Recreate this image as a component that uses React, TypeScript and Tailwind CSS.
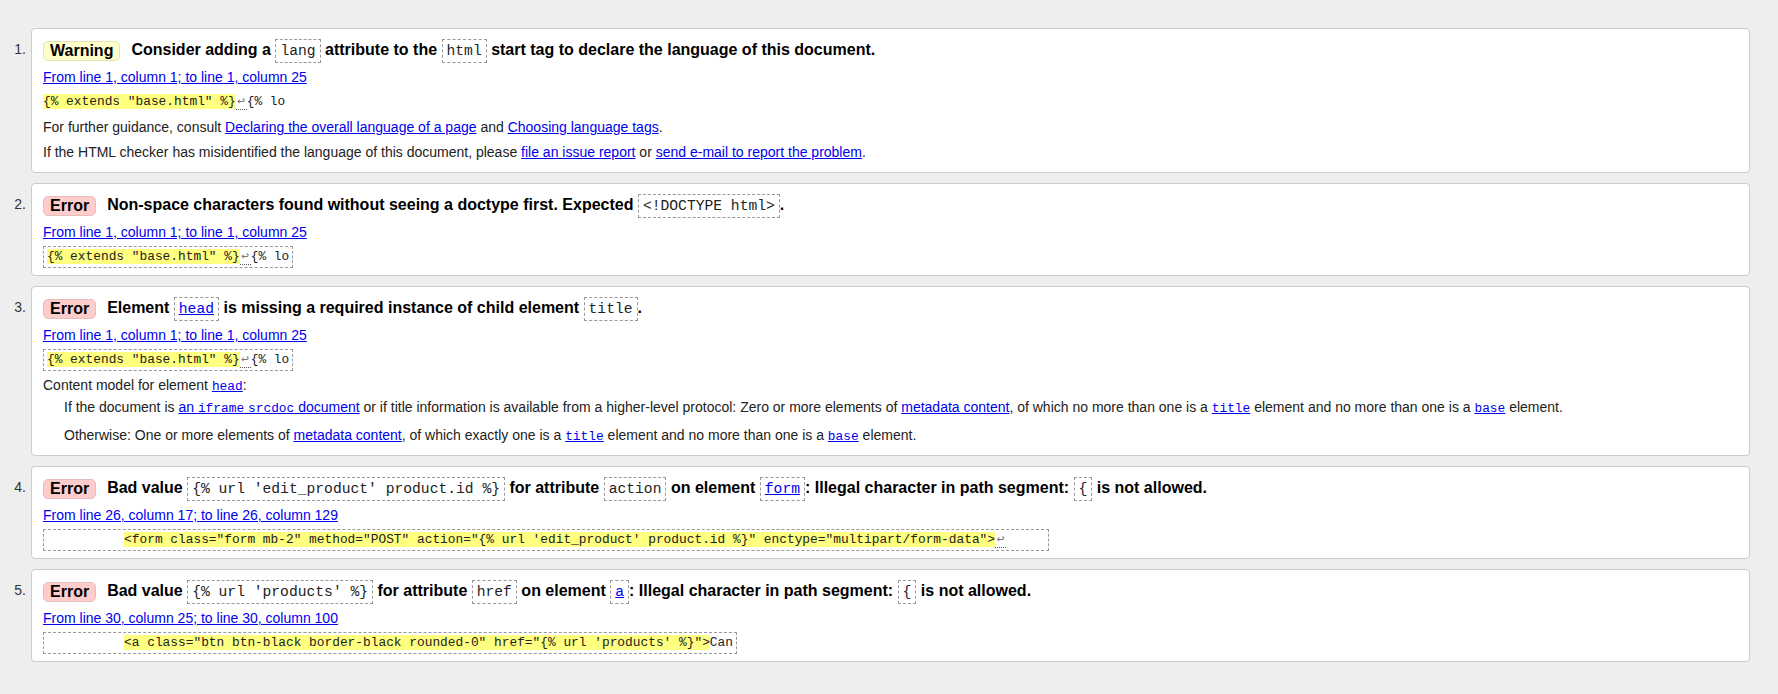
import type { ReactNode } from 'react';

// Nu HTML checker style result list: numbered cards with a badge, a location link and a source extract.

const mono = "font-['Liberation_Mono','DejaVu_Sans_Mono',monospace]";

function HCode({ children, link }: { children: ReactNode; link?: boolean }) {
  return (
    <code
      className={`${mono} inline-block align-middle border border-dashed border-[#999] px-[4px] py-[2px] leading-[18px] text-[14.67px] font-normal ${
        link ? 'text-[#00e] underline' : 'text-[#222]'
      }`}
    >
      {children}
    </code>
  );
}

function C({ children }: { children: ReactNode }) {
  return <code className={`${mono} text-[12.85px] leading-none`}>{children}</code>;
}

function A({ children }: { children: ReactNode }) {
  return <a className="text-[#00e] underline cursor-pointer">{children}</a>;
}

function Mark({ children }: { children: ReactNode }) {
  return <span className="bg-[#ffff80]">{children}</span>;
}

function Lf() {
  return (
    <span className="inline-block w-[11px] text-center leading-none text-[#777] border-b border-dotted border-[#555]">↩</span>
  );
}

function Heading({ kind, children }: { kind: 'warning' | 'error'; children: ReactNode }) {
  return (
    <div className="h-[25px] leading-[25px] text-[16px] font-bold text-black whitespace-nowrap">
      <strong
        className={`inline-block align-middle mr-[11px] px-[6px] leading-[18px] rounded-[5px] border ${
          kind === 'warning' ? 'bg-[#ffffcc] border-[#e4e4b0]' : 'bg-[#ffcccc] border-[#e8bcbc]'
        }`}
      >
        {kind === 'warning' ? 'Warning' : 'Error'}
      </strong>
      {children}
    </div>
  );
}

function Loc({ children }: { children: ReactNode }) {
  return (
    <p className="mt-[6px] leading-[18px]">
      <A>{children}</A>
    </p>
  );
}

function Extract({ children }: { children: ReactNode }) {
  return (
    <div className="mt-[7px] h-[18px] flex items-center">
      <code
        className={`${mono} text-[12.85px] text-[#222] whitespace-pre border border-dashed border-[#999] px-[3px] py-[2px] leading-[16px]`}
      >
        {children}
      </code>
    </div>
  );
}

function Item({ n, short, children }: { n: number; short?: boolean; children: ReactNode }) {
  return (
    <li className="flex">
      <div className="w-[31px] shrink-0 pr-[5px] pt-[9px] text-right text-[14px] leading-[25px] text-[#333]">{n}.</div>
      <div
        className={`flex-1 bg-white border border-[#ccc] rounded-[4px] pl-[11px] pr-[11px] pt-[8px] ${short ? 'pb-[9px]' : 'pb-[11px]'}`}
      >
        {children}
      </div>
    </li>
  );
}

export default function App() {
  return (
    <div className="min-h-[694px] bg-[#eeeeee] pt-[28px] pr-[28px] font-['Liberation_Sans',Arial,sans-serif] text-[14px] text-[#222]">
      <ol className="flex flex-col gap-[10px]">
        <Item n={1}>
          <Heading kind="warning">
            Consider adding a <HCode>lang</HCode> attribute to the <HCode>html</HCode> start tag to declare the language of this document.
          </Heading>
          <Loc>From line 1, column 1; to line 1, column 25</Loc>
          <p className={`mt-[7px] h-[18px] leading-[18px] whitespace-pre ${mono} text-[12.85px]`}>
            <Mark>{'{% extends "base.html" %}'}</Mark>
            <Lf />
            {'{% lo'}
          </p>
          <p className="mt-[7px] leading-[18px]">
            For further guidance, consult <A>Declaring the overall language of a page</A> and <A>Choosing language tags</A>.
          </p>
          <p className="mt-[7px] leading-[18px]">
            If the HTML checker has misidentified the language of this document, please <A>file an issue report</A> or{' '}
            <A>send e-mail to report the problem</A>.
          </p>
        </Item>

        <Item n={2} short>
          <Heading kind="error">
            Non-space characters found without seeing a doctype first. Expected <HCode>{'<!DOCTYPE html>'}</HCode>.
          </Heading>
          <Loc>From line 1, column 1; to line 1, column 25</Loc>
          <Extract>
            <Mark>{'{% extends "base.html" %}'}</Mark>
            <Lf />
            {'{% lo'}
          </Extract>
        </Item>

        <Item n={3}>
          <Heading kind="error">
            Element <HCode link>head</HCode> is missing a required instance of child element <HCode>title</HCode>.
          </Heading>
          <Loc>From line 1, column 1; to line 1, column 25</Loc>
          <Extract>
            <Mark>{'{% extends "base.html" %}'}</Mark>
            <Lf />
            {'{% lo'}
          </Extract>
          <p className="mt-[7px] h-[18px] leading-[18px]">
            Content model for element{' '}
            <a className="text-[#00e] underline">
              <C>head</C>
            </a>
            :
          </p>
          <dl className="pl-[21px]">
            <dd className="mt-[4px] h-[18px] leading-[18px]">
              If the document is{' '}
              <A>
                an <C>iframe</C> <C>srcdoc</C> document
              </A>{' '}
              or if title information is available from a higher-level protocol: Zero or more elements of <A>metadata content</A>, of which no
              more than one is a{' '}
              <A>
                <C>title</C>
              </A>{' '}
              element and no more than one is a{' '}
              <A>
                <C>base</C>
              </A>{' '}
              element.
            </dd>
            <dd className="mt-[10px] h-[18px] leading-[18px]">
              Otherwise: One or more elements of <A>metadata content</A>, of which exactly one is a{' '}
              <A>
                <C>title</C>
              </A>{' '}
              element and no more than one is a{' '}
              <A>
                <C>base</C>
              </A>{' '}
              element.
            </dd>
          </dl>
        </Item>

        <Item n={4} short>
          <Heading kind="error">
            Bad value <HCode>{"{% url 'edit_product' product.id %}"}</HCode> for attribute <HCode>action</HCode> on element{' '}
            <HCode link>form</HCode>: Illegal character in path segment: <HCode>{'{'}</HCode> is not allowed.
          </Heading>
          <Loc>From line 26, column 17; to line 26, column 129</Loc>
          <Extract>
            {'          '}
            <Mark>{'<form class="form mb-2" method="POST" action="{% url \'edit_product\' product.id %}" enctype="multipart/form-data">'}</Mark>
            <Lf />
            {'     '}
          </Extract>
        </Item>

        <Item n={5} short>
          <Heading kind="error">
            Bad value <HCode>{"{% url 'products' %}"}</HCode> for attribute <HCode>href</HCode> on element <HCode link>a</HCode>: Illegal
            character in path segment: <HCode>{'{'}</HCode> is not allowed.
          </Heading>
          <Loc>From line 30, column 25; to line 30, column 100</Loc>
          <Extract>
            {'          '}
            <Mark>{'<a class="btn btn-black border-black rounded-0" href="{% url \'products\' %}">'}</Mark>
            {'Can'}
          </Extract>
        </Item>
      </ol>
    </div>
  );
}
